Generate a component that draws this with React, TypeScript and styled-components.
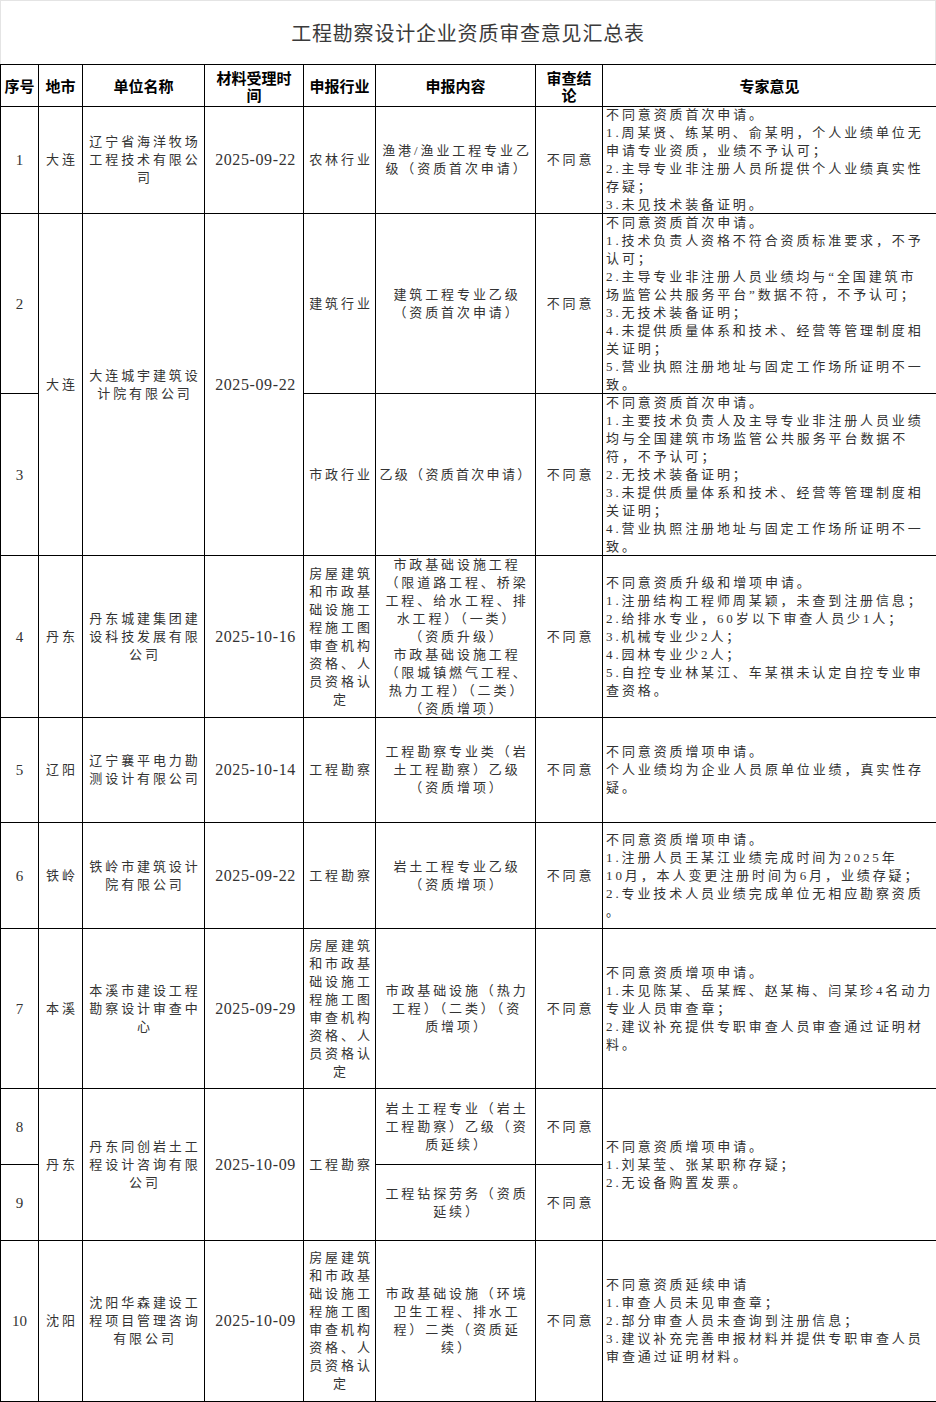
import React from 'react';
import styled, { createGlobalStyle } from 'styled-components';

const GlobalStyle = createGlobalStyle`
  html, body {
    margin: 0;
    padding: 0;
    background: #fff;
  }
`;

interface CellProps {
  $align?: 'center' | 'left';
  $font?: 'text' | 'date' | 'num';
  $tight?: boolean;
}

interface RowProps {
  $h: number;
}

interface ColProps {
  $w: number;
}

const Sheet = styled.div`
  width: 936px;
  font-family: 'Liberation Serif', 'Noto Sans CJK SC', serif;
`;

const TitleBar = styled.div`
  box-sizing: border-box;
  height: 64px;
  border: 1px solid #e4e4e4;
  border-bottom: none;
  display: flex;
  align-items: center;
  justify-content: center;
  font-family: 'Noto Sans CJK SC', sans-serif;
  font-size: 20px;
  font-weight: 400;
  color: #3a3a3a;
  letter-spacing: 0.8px;
`;

const Grid = styled.table`
  width: 936px;
  border-collapse: collapse;
  table-layout: fixed;
  border: 1px solid #000;
`;

const Col = styled.col<ColProps>`
  width: ${(p) => p.$w}px;
`;

const Row = styled.tr<RowProps>`
  height: ${(p) => p.$h}px;
`;

const HeadCell = styled.th`
  border: 1px solid #000;
  padding: 0 2px;
  font-family: 'Noto Sans CJK SC', sans-serif;
  font-size: 15px;
  font-weight: 700;
  line-height: 17px;
  color: #000;
  text-align: center;
  vertical-align: middle;
`;

const Cell = styled.td<CellProps>`
  border: 1px solid #000;
  padding: 0 0 0 ${(p) => (p.$font === 'num' ? 0 : p.$tight ? 1 : 3)}px;
  text-align: ${(p) => p.$align ?? 'center'};
  vertical-align: middle;
  color: #333;
  font-size: ${(p) => (p.$font === 'date' ? 16 : p.$font === 'num' ? 15 : 13)}px;
  letter-spacing: ${(p) =>
    p.$font === 'date' ? 0.6 : p.$font === 'num' ? 0 : p.$tight ? 2.3 : 2.9}px;
  line-height: 18px;
  overflow: hidden;
`;

/* lines may run right up to the cell borders, as in the sheet export */
const Stack = styled.div`
  margin: -3px 0;
`;

const Line = styled.span`
  display: block;
  white-space: nowrap;
`;

function Lines({ items }: { items: string[] }) {
  return (
    <Stack>
      {items.map((t, i) => (
        <Line key={i}>{t}</Line>
      ))}
    </Stack>
  );
}

const HeadLines = styled.div`
  display: flex;
  flex-direction: column;
`;

const reviewOrg = ['房屋建筑', '和市政基', '础设施工', '程施工图', '审查机构', '资格、人', '员资格认', '定'];

export default function App() {
  return (
    <Sheet>
      <GlobalStyle />
      <TitleBar>工程勘察设计企业资质审查意见汇总表</TitleBar>
      <Grid>
        <colgroup>
          <Col $w={38} />
          <Col $w={44} />
          <Col $w={122} />
          <Col $w={99} />
          <Col $w={72} />
          <Col $w={160} />
          <Col $w={67} />
          <Col $w={334} />
        </colgroup>
        <thead>
          <Row $h={42}>
            <HeadCell>序号</HeadCell>
            <HeadCell>地市</HeadCell>
            <HeadCell>单位名称</HeadCell>
            <HeadCell>
              <HeadLines>
                <span>材料受理时</span>
                <span>间</span>
              </HeadLines>
            </HeadCell>
            <HeadCell>申报行业</HeadCell>
            <HeadCell>申报内容</HeadCell>
            <HeadCell>
              <HeadLines>
                <span>审查结</span>
                <span>论</span>
              </HeadLines>
            </HeadCell>
            <HeadCell>专家意见</HeadCell>
          </Row>
        </thead>
        <tbody>
          <Row $h={107}>
            <Cell $font="num">1</Cell>
            <Cell>大连</Cell>
            <Cell>
              <Lines items={['辽宁省海洋牧场', '工程技术有限公', '司']} />
            </Cell>
            <Cell $font="date">2025-09-22</Cell>
            <Cell>农林行业</Cell>
            <Cell>
              <Lines items={['渔港/渔业工程专业乙', '级（资质首次申请）']} />
            </Cell>
            <Cell>不同意</Cell>
            <Cell $align="left">
              <Lines
                items={[
                  '不同意资质首次申请。',
                  '1.周某贤、练某明、俞某明，个人业绩单位无',
                  '申请专业资质，业绩不予认可；',
                  '2.主导专业非注册人员所提供个人业绩真实性',
                  '存疑；',
                  '3.未见技术装备证明。',
                ]}
              />
            </Cell>
          </Row>
          <Row $h={180}>
            <Cell $font="num">2</Cell>
            <Cell rowSpan={2}>大连</Cell>
            <Cell rowSpan={2}>
              <Lines items={['大连城宇建筑设', '计院有限公司']} />
            </Cell>
            <Cell rowSpan={2} $font="date">
              2025-09-22
            </Cell>
            <Cell>建筑行业</Cell>
            <Cell>
              <Lines items={['建筑工程专业乙级', '（资质首次申请）']} />
            </Cell>
            <Cell>不同意</Cell>
            <Cell $align="left">
              <Lines
                items={[
                  '不同意资质首次申请。',
                  '1.技术负责人资格不符合资质标准要求，不予',
                  '认可；',
                  '2.主导专业非注册人员业绩均与“全国建筑市',
                  '场监管公共服务平台”数据不符，不予认可；',
                  '3.无技术装备证明；',
                  '4.未提供质量体系和技术、经营等管理制度相',
                  '关证明；',
                  '5.营业执照注册地址与固定工作场所证明不一',
                  '致。',
                ]}
              />
            </Cell>
          </Row>
          <Row $h={162}>
            <Cell $font="num">3</Cell>
            <Cell>市政行业</Cell>
            <Cell $tight>乙级（资质首次申请）</Cell>
            <Cell>不同意</Cell>
            <Cell $align="left">
              <Lines
                items={[
                  '不同意资质首次申请。',
                  '1.主要技术负责人及主导专业非注册人员业绩',
                  '均与全国建筑市场监管公共服务平台数据不',
                  '符，不予认可；',
                  '2.无技术装备证明；',
                  '3.未提供质量体系和技术、经营等管理制度相',
                  '关证明；',
                  '4.营业执照注册地址与固定工作场所证明不一',
                  '致。',
                ]}
              />
            </Cell>
          </Row>
          <Row $h={162}>
            <Cell $font="num">4</Cell>
            <Cell>丹东</Cell>
            <Cell>
              <Lines items={['丹东城建集团建', '设科技发展有限', '公司']} />
            </Cell>
            <Cell $font="date">2025-10-16</Cell>
            <Cell>
              <Lines items={reviewOrg} />
            </Cell>
            <Cell>
              <Lines
                items={[
                  '市政基础设施工程',
                  '（限道路工程、桥梁',
                  '工程、给水工程、排',
                  '水工程）（一类）',
                  '（资质升级）',
                  '市政基础设施工程',
                  '（限城镇燃气工程、',
                  '热力工程）（二类）',
                  '（资质增项）',
                ]}
              />
            </Cell>
            <Cell>不同意</Cell>
            <Cell $align="left">
              <Lines
                items={[
                  '不同意资质升级和增项申请。',
                  '1.注册结构工程师周某颖，未查到注册信息；',
                  '2.给排水专业，60岁以下审查人员少1人；',
                  '3.机械专业少2人；',
                  '4.园林专业少2人；',
                  '5.自控专业林某江、车某祺未认定自控专业审',
                  '查资格。',
                ]}
              />
            </Cell>
          </Row>
          <Row $h={105}>
            <Cell $font="num">5</Cell>
            <Cell>辽阳</Cell>
            <Cell>
              <Lines items={['辽宁襄平电力勘', '测设计有限公司']} />
            </Cell>
            <Cell $font="date">2025-10-14</Cell>
            <Cell>工程勘察</Cell>
            <Cell>
              <Lines items={['工程勘察专业类（岩', '土工程勘察）乙级', '（资质增项）']} />
            </Cell>
            <Cell>不同意</Cell>
            <Cell $align="left">
              <Lines
                items={['不同意资质增项申请。', '个人业绩均为企业人员原单位业绩，真实性存', '疑。']}
              />
            </Cell>
          </Row>
          <Row $h={106}>
            <Cell $font="num">6</Cell>
            <Cell>铁岭</Cell>
            <Cell>
              <Lines items={['铁岭市建筑设计', '院有限公司']} />
            </Cell>
            <Cell $font="date">2025-09-22</Cell>
            <Cell>工程勘察</Cell>
            <Cell>
              <Lines items={['岩土工程专业乙级', '（资质增项）']} />
            </Cell>
            <Cell>不同意</Cell>
            <Cell $align="left">
              <Lines
                items={[
                  '不同意资质增项申请。',
                  '1.注册人员王某江业绩完成时间为2025年',
                  '10月，本人变更注册时间为6月，业绩存疑；',
                  '2.专业技术人员业绩完成单位无相应勘察资质',
                  '。',
                ]}
              />
            </Cell>
          </Row>
          <Row $h={160}>
            <Cell $font="num">7</Cell>
            <Cell>本溪</Cell>
            <Cell>
              <Lines items={['本溪市建设工程', '勘察设计审查中', '心']} />
            </Cell>
            <Cell $font="date">2025-09-29</Cell>
            <Cell>
              <Lines items={reviewOrg} />
            </Cell>
            <Cell>
              <Lines items={['市政基础设施（热力', '工程）（二类）（资', '质增项）']} />
            </Cell>
            <Cell>不同意</Cell>
            <Cell $align="left">
              <Lines
                items={[
                  '不同意资质增项申请。',
                  '1.未见陈某、岳某辉、赵某梅、闫某珍4名动力',
                  '专业人员审查章；',
                  '2.建议补充提供专职审查人员审查通过证明材',
                  '料。',
                ]}
              />
            </Cell>
          </Row>
          <Row $h={76}>
            <Cell $font="num">8</Cell>
            <Cell rowSpan={2}>丹东</Cell>
            <Cell rowSpan={2}>
              <Lines items={['丹东同创岩土工', '程设计咨询有限', '公司']} />
            </Cell>
            <Cell rowSpan={2} $font="date">
              2025-10-09
            </Cell>
            <Cell rowSpan={2}>工程勘察</Cell>
            <Cell>
              <Lines items={['岩土工程专业（岩土', '工程勘察）乙级（资', '质延续）']} />
            </Cell>
            <Cell>不同意</Cell>
            <Cell rowSpan={2} $align="left">
              <Lines items={['不同意资质增项申请。', '1.刘某莹、张某职称存疑；', '2.无设备购置发票。']} />
            </Cell>
          </Row>
          <Row $h={76}>
            <Cell $font="num">9</Cell>
            <Cell>
              <Lines items={['工程钻探劳务（资质', '延续）']} />
            </Cell>
            <Cell>不同意</Cell>
          </Row>
          <Row $h={161}>
            <Cell $font="num">10</Cell>
            <Cell>沈阳</Cell>
            <Cell>
              <Lines items={['沈阳华森建设工', '程项目管理咨询', '有限公司']} />
            </Cell>
            <Cell $font="date">2025-10-09</Cell>
            <Cell>
              <Lines items={reviewOrg} />
            </Cell>
            <Cell>
              <Lines items={['市政基础设施（环境', '卫生工程、排水工', '程）二类（资质延', '续）']} />
            </Cell>
            <Cell>不同意</Cell>
            <Cell $align="left">
              <Lines
                items={[
                  '不同意资质延续申请',
                  '1.审查人员未见审查章；',
                  '2.部分审查人员未查询到注册信息；',
                  '3.建议补充完善申报材料并提供专职审查人员',
                  '审查通过证明材料。',
                ]}
              />
            </Cell>
          </Row>
        </tbody>
      </Grid>
    </Sheet>
  );
}
